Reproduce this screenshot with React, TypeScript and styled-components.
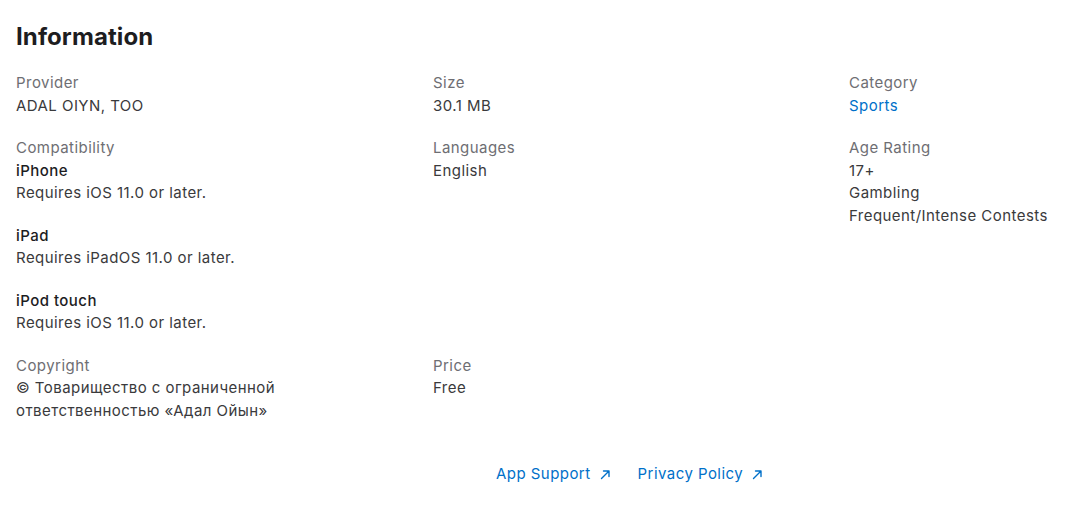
import styled, { createGlobalStyle } from "styled-components";

const GlobalStyle = createGlobalStyle`
  body {
    margin: 0;
    background: #fff;
    font-family: Inter, "Noto Sans", "Liberation Sans", sans-serif;
    -webkit-font-smoothing: antialiased;
  }
`;

const Section = styled.section`
  padding: 21px 16px 0;
`;

const Title = styled.h2`
  margin: 0 0 19px;
  font-size: 24px;
  line-height: 32px;
  font-weight: 700;
  color: #1d1d1f;
  letter-spacing: 0.1px;
`;

const InfoGrid = styled.dl`
  margin: 0;
  display: grid;
  grid-template-columns: 417px 416px 1fr;
  row-gap: 20px;
  font-size: 15px;
  line-height: 22.5px;
  letter-spacing: 0.45px;
`;

const Item = styled.div``;

const Label = styled.dt`
  color: #6e6e73;
`;

const Value = styled.dd<{ $link?: boolean }>`
  margin: 0;
  color: ${(p) => (p.$link ? "#0070c9" : "#3a3a3c")};
`;

const Device = styled.div`
  & + & {
    margin-top: 20px;
  }
`;

const DeviceName = styled.div`
  color: #1d1d1f;
  font-weight: 500;
`;

const Footer = styled.div`
  display: flex;
  gap: 27px;
  padding: 41px 0 0 480px;
  font-size: 15px;
  line-height: 22px;
  letter-spacing: 0.45px;
`;

const ExtLink = styled.a`
  color: #0070c9;
  text-decoration: none;
  display: inline-flex;
  align-items: center;
  gap: 9px;
`;

function Arrow() {
  return (
    <svg width="11" height="11" viewBox="0 0 11 11" fill="none">
      <path
        d="M1.5 9.5 L9 2 M3.5 2 H9 V7.5"
        stroke="#0070c9"
        strokeWidth="1.4"
        strokeLinecap="round"
        strokeLinejoin="round"
      />
    </svg>
  );
}

const devices = [
  { name: "iPhone", req: "Requires iOS 11.0 or later." },
  { name: "iPad", req: "Requires iPadOS 11.0 or later." },
  { name: "iPod touch", req: "Requires iOS 11.0 or later." },
];

export default function App() {
  return (
    <>
      <GlobalStyle />
      <Section>
        <Title>Information</Title>
        <InfoGrid>
          <Item>
            <Label>Provider</Label>
            <Value>ADAL OIYN, TOO</Value>
          </Item>
          <Item>
            <Label>Size</Label>
            <Value>30.1 MB</Value>
          </Item>
          <Item>
            <Label>Category</Label>
            <Value $link>Sports</Value>
          </Item>

          <Item>
            <Label>Compatibility</Label>
            <Value>
              {devices.map((d) => (
                <Device key={d.name}>
                  <DeviceName>{d.name}</DeviceName>
                  <div>{d.req}</div>
                </Device>
              ))}
            </Value>
          </Item>
          <Item>
            <Label>Languages</Label>
            <Value>English</Value>
          </Item>
          <Item>
            <Label>Age Rating</Label>
            <Value>
              17+
              <br />
              Gambling
              <br />
              Frequent/Intense Contests
            </Value>
          </Item>

          <Item>
            <Label>Copyright</Label>
            <Value>
              © Товарищество с ограниченной
              <br />
              ответственностью «Адал Ойын»
            </Value>
          </Item>
          <Item>
            <Label>Price</Label>
            <Value>Free</Value>
          </Item>
        </InfoGrid>
        <Footer>
          <ExtLink href="#">
            App Support <Arrow />
          </ExtLink>
          <ExtLink href="#">
            Privacy Policy <Arrow />
          </ExtLink>
        </Footer>
      </Section>
    </>
  );
}
